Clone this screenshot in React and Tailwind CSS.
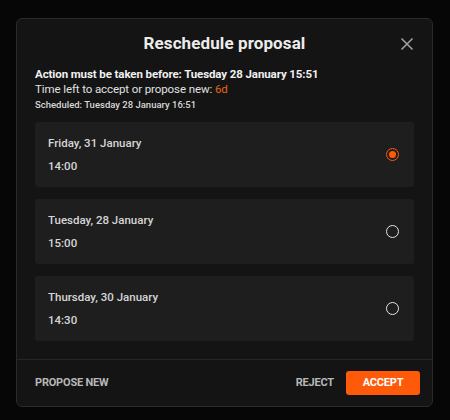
import React from "react";

const options = [
  { date: "Friday, 31 January", time: "14:00", selected: true },
  { date: "Tuesday, 28 January", time: "15:00", selected: false },
  { date: "Thursday, 30 January", time: "14:30", selected: false },
];

export default function App() {
  return (
    <div
      className="w-[450px] h-[420px] bg-[#060606] overflow-hidden pt-[18px] pl-[16px]"
      style={{ fontFamily: "Roboto, 'Liberation Sans', sans-serif" }}
    >
      <div className="w-[417px] h-[389px] bg-[#141414] border border-[#2a2a2a] rounded-[6px] flex flex-col">
        <div className="relative h-[48px] flex items-center justify-center pt-[2px]">
          <h2 className="text-[17px] font-bold text-[#ececec] tracking-[0.1px]">Reschedule proposal</h2>
          <button className="absolute right-[18px] top-[18px] text-[#a0a0a0]">
            <svg width="14" height="14" viewBox="0 0 14 14" fill="none" stroke="currentColor" strokeWidth="1.6">
              <path d="M1.5 1.5 L12.5 12.5 M12.5 1.5 L1.5 12.5" />
            </svg>
          </button>
        </div>
        <div className="px-[18px] flex flex-col">
          <p className="text-[11.5px] leading-[15px] font-bold text-[#f0f0f0] tracking-[-0.1px]">
            Action must be taken before: Tuesday 28 January 15:51
          </p>
          <p className="text-[11.5px] leading-[15px] text-[#e0e0e0] tracking-[-0.1px]">
            Time left to accept or propose new: <span className="text-[#e8651c]">6d</span>
          </p>
          <p className="text-[9.5px] leading-[15px] font-medium text-[#d8d8d8]">
            Scheduled: Tuesday 28 January 16:51
          </p>
          <div className="flex flex-col gap-[12px] mt-[10px]">
            {options.map((o) => (
              <div
                key={o.date}
                className="h-[65px] bg-[#1e1e1e] rounded-[3px] flex items-center justify-between pl-[13px] pr-[15px]"
              >
                <div className="flex flex-col gap-[9px]">
                  <span className="text-[11.5px] leading-[14px] font-medium text-[#d6d6d6]">{o.date}</span>
                  <span className="text-[11.5px] leading-[14px] font-medium text-[#d6d6d6]">{o.time}</span>
                </div>
                {o.selected ? (
                  <span className="w-[13px] h-[13px] rounded-full border-[1.5px] border-[#ff5a0a] flex items-center justify-center">
                    <span className="w-[7px] h-[7px] rounded-full bg-[#ff5a0a]" />
                  </span>
                ) : (
                  <span className="w-[13px] h-[13px] rounded-full border-[1.5px] border-[#e6e6e6]" />
                )}
              </div>
            ))}
          </div>
        </div>
        <div className="mt-[18px] border-t border-[#262626] flex-1 flex items-center justify-between pl-[18px] pr-[12px]">
          <button className="text-[11px] font-bold text-[#b8b8b8] tracking-[-0.2px]">PROPOSE NEW</button>
          <div className="flex items-center gap-[12px]">
            <button className="text-[11px] font-bold text-[#b8b8b8] tracking-[-0.2px]">REJECT</button>
            <button className="w-[74px] h-[24px] rounded-[3px] bg-[#ff5a0a] text-[11px] font-bold text-white tracking-[-0.2px]">
              ACCEPT
            </button>
          </div>
        </div>
      </div>
    </div>
  );
}
